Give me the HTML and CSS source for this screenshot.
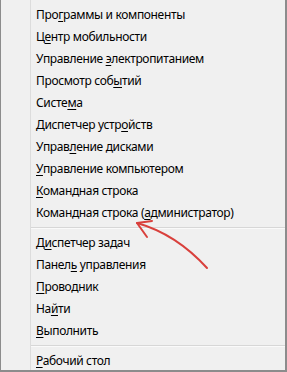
FILE: index.html
```html
<!DOCTYPE html>
<html lang="ru">
<head>
    <meta charset="UTF-8">
    <title>Меню Win+X</title>
    <link rel="stylesheet" href="styles.css">
</head>
<body>
    <div class="menu">
        <ul class="items">
            <li>Про<u>г</u>раммы и компоненты</li>
            <li>Ц<u>е</u>нтр мобильности</li>
            <li>Управление <u>э</u>лектропитанием</li>
            <li>Просмотр соб<u>ы</u>тий</li>
            <li>Систе<u>м</u>а</li>
            <li>Диспетчер устр<u>о</u>йств</li>
            <li>Управ<u>л</u>ение дисками</li>
            <li><u>У</u>правление компьютером</li>
            <li><u>К</u>омандная строка</li>
            <li>Командная строка (<u>а</u>дминистратор)</li>
            <li class="sep"></li>
            <li>Д<u>и</u>спетчер задач</li>
            <li>Панел<u>ь</u> управления</li>
            <li><u>П</u>роводник</li>
            <li>На<u>й</u>ти</li>
            <li><u>В</u>ыполнить</li>
            <li class="sep"></li>
            <li><u>Р</u>абочий стол</li>
        </ul>

        <!-- red arrow drawn over the menu -->
        <svg class="arrow" width="287" height="372" viewBox="0 0 287 372">
            <path d="M137 223 Q176 234 207 268" />
            <path d="M152 221 L137 223 L147 237" />
        </svg>
    </div>
</body>
</html>
```

FILE: styles.css
```css
body {
    margin: 0;
    font-family: "Noto Sans", Arial, sans-serif;
    font-size: 12px;
    letter-spacing: -0.35px;
    color: #000;
}
.menu {
    position: relative;
    width: 287px;
    height: 372px;
    box-sizing: border-box;
    background-color: #f0f0f0;
    border-left: 1px solid #8c8c8c;
    border-right: 2px solid #8c8c8c;
    border-bottom: 2px solid #8c8c8c;
}
.items {
    list-style: none;
    margin: 0 0 0 29px;
    padding: 4px 0 0;
    height: 366px;
    border-left: 1px solid #dcdcdc;
}
.items li {
    height: 22px;
    line-height: 22px;
    padding-left: 5px;
    white-space: nowrap;
}
.items li.sep {
    height: 0;
    padding: 0;
    margin: 3px 0 3px 0;
    border-top: 1px solid #d7d7d7;
    border-bottom: 1px solid #fafafa;
}
.items u {
    text-decoration-thickness: 1px;
    text-underline-offset: 2px;
}
.arrow {
    position: absolute;
    left: -1px;
    top: 0;
}
.arrow path {
    fill: none;
    stroke: #d9403c;
    stroke-width: 2;
    stroke-linecap: round;
    stroke-linejoin: round;
}
```
